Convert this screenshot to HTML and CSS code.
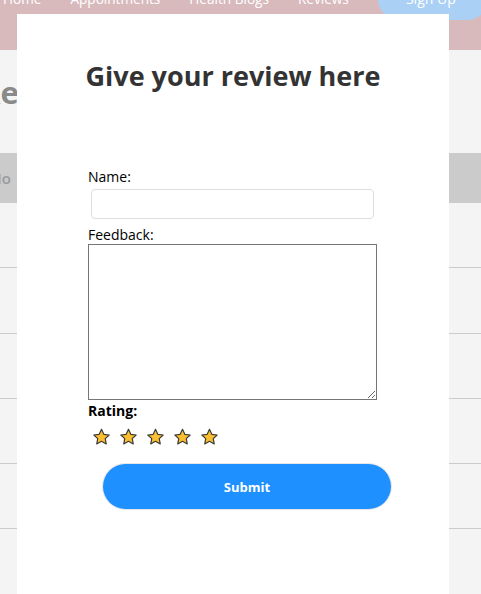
FILE: index.html
```html
<!DOCTYPE html>
<html lang="en">
<head>
<meta charset="utf-8">
<title>Reviews</title>
<link rel="stylesheet" href="styles.css">
</head>
<body>
<nav class="nav">
  <a class="nav-link" href="#">Home</a>
  <a class="nav-link" href="#">Appointments</a>
  <a class="nav-link" href="#">Health Blogs</a>
  <a class="nav-link" href="#">Reviews</a>
  <a class="nav-signup" href="#">Sign Up</a>
</nav>
<main class="page">
  <h1 class="page-title">Reviews</h1>
  <div class="table">
    <div class="table-head"><span class="th">No</span></div>
    <div class="row"></div>
    <div class="row"></div>
    <div class="row"></div>
    <div class="row"></div>
    <div class="row"></div>
    <div class="row"></div>
  </div>
</main>

<div class="modal">
  <h2 class="modal-title">Give your review here</h2>
  <form class="form">
    <label class="label" for="name">Name:</label>
    <input class="input" id="name" type="text">
    <label class="label" for="feedback">Feedback:</label>
    <textarea class="textarea" id="feedback"></textarea>
    <label class="label label-bold">Rating:</label>
    <div class="stars">
      <svg class="star" viewBox="0 0 24 24"><path d="M12 1.8l3.1 6.6 7.1.9-5.2 4.9 1.3 7.1L12 17.8l-6.3 3.5 1.3-7.1-5.2-4.9 7.1-.9z"/></svg>
      <svg class="star" viewBox="0 0 24 24"><path d="M12 1.8l3.1 6.6 7.1.9-5.2 4.9 1.3 7.1L12 17.8l-6.3 3.5 1.3-7.1-5.2-4.9 7.1-.9z"/></svg>
      <svg class="star" viewBox="0 0 24 24"><path d="M12 1.8l3.1 6.6 7.1.9-5.2 4.9 1.3 7.1L12 17.8l-6.3 3.5 1.3-7.1-5.2-4.9 7.1-.9z"/></svg>
      <svg class="star" viewBox="0 0 24 24"><path d="M12 1.8l3.1 6.6 7.1.9-5.2 4.9 1.3 7.1L12 17.8l-6.3 3.5 1.3-7.1-5.2-4.9 7.1-.9z"/></svg>
      <svg class="star" viewBox="0 0 24 24"><path d="M12 1.8l3.1 6.6 7.1.9-5.2 4.9 1.3 7.1L12 17.8l-6.3 3.5 1.3-7.1-5.2-4.9 7.1-.9z"/></svg>
    </div>
    <button class="submit" type="button">Submit</button>
  </form>
</div>
</body>
</html>
```

FILE: styles.css
```css
html, body {
  margin: 0;
  padding: 0;
  height: 100%;
  overflow: hidden;
}
body {
  font-family: "Open Sans", "Noto Sans", sans-serif;
  background: #f4f4f4;
  position: relative;
}
.nav {
  display: flex;
  align-items: flex-start;
  gap: 29px;
  height: 50px;
  background: #d8babd;
  padding-left: 3px;
  overflow: hidden;
}
.nav-link {
  flex-shrink: 0;
  white-space: nowrap;
  color: #ffffff;
  text-decoration: none;
  font-size: 13.6px;
  line-height: 20px;
  margin-top: -11px;
}
.nav-signup {
  flex-shrink: 0;
  white-space: nowrap;
  display: block;
  width: 110px;
  height: 42px;
  margin-top: -22px;
  border-radius: 21px;
  background: #aad0f5;
  color: #ffffff;
  font-size: 14px;
  line-height: 20px;
  text-align: center;
  padding-top: 11px;
  padding-right: 4px;
  text-decoration: none;
  box-sizing: border-box;
}
.page {
  padding-top: 22px;
}
.page-title {
  margin: 0 0 0 -20px;
  font-size: 31px;
  line-height: 40px;
  font-weight: 700;
  color: #8a8a8a;
}
.table {
  margin-top: 41px;
}
.table-head {
  height: 50px;
  background: #cbcbcb;
  display: flex;
  align-items: center;
}
.th {
  margin-left: -10px;
  color: #9a9a9a;
  font-size: 15px;
  font-weight: 600;
}
.row {
  height: 64.25px;
  border-bottom: 1px solid #cccccc;
}
.modal {
  position: absolute;
  top: 14px;
  left: 17px;
  width: 432px;
  height: 600px;
  background: #ffffff;
  box-sizing: border-box;
  padding-top: 44px;
}
.modal-title {
  margin: 0;
  text-align: center;
  font-size: 27px;
  line-height: 36px;
  font-weight: 700;
  color: #333333;
}
.form {
  display: flex;
  flex-direction: column;
  align-items: flex-start;
  margin-top: 73px;
  padding-left: 71px;
}
.label {
  font-size: 14px;
  line-height: 19px;
  color: #000000;
  font-weight: 500;
}
.label-bold {
  font-weight: 700;
}
.input {
  margin: 3px 0 6px 3px;
  width: 283px;
  height: 30px;
  box-sizing: border-box;
  border: 1px solid #dddddd;
  border-radius: 4px;
  padding: 4px 8px;
  font-size: 14px;
}
.textarea {
  margin: 0 0 1px 0;
  width: 289px;
  height: 156px;
  box-sizing: border-box;
  border: 1px solid #767676;
  border-radius: 0;
  font-size: 14px;
  padding: 2px;
  resize: both;
}
.stars {
  display: flex;
  gap: 8px;
  margin: 8px 0 0 4px;
}
.star {
  width: 19px;
  height: 18px;
}
.star path {
  fill: #fbbf2f;
  stroke: #3a3a3a;
  stroke-width: 1.6;
  stroke-linejoin: round;
}
.submit {
  margin: 18px 0 0 15px;
  width: 288px;
  height: 45px;
  border: none;
  border-radius: 23px;
  background: #1e90ff;
  color: #ffffff;
  font-family: "Open Sans", "Noto Sans", sans-serif;
  font-size: 13px;
  font-weight: 700;
  box-shadow: 0 0 0 1px #e6e6e6;
  cursor: pointer;
}
```
